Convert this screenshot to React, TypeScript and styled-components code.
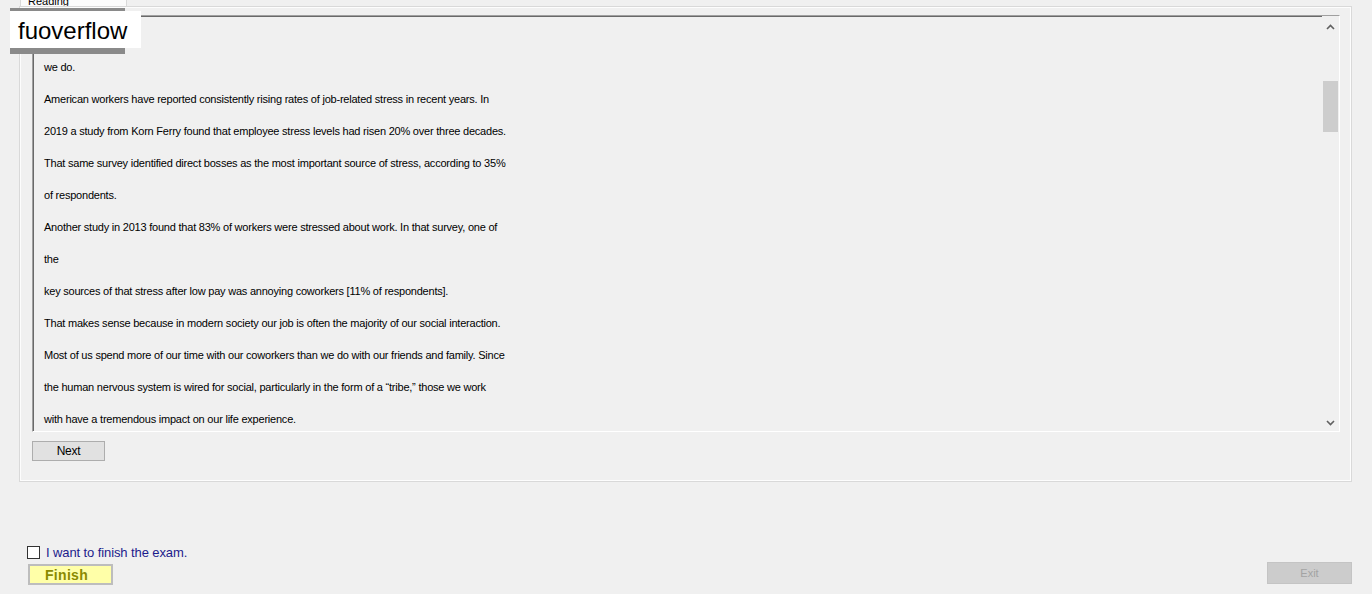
import React from 'react'
import styled, { createGlobalStyle } from 'styled-components'

const GlobalStyle = createGlobalStyle`
  html, body {
    margin: 0;
    padding: 0;
    background: #f0f0f0;
    font-family: "Liberation Sans", Arial, sans-serif;
  }
  #root {
    width: 1372px;
    height: 594px;
    overflow: hidden;
  }
`;

const Page = styled.div`
  position: relative;
  width: 1372px;
  height: 594px;
  box-sizing: border-box;
  padding: 0 20px 0 19px;
  display: flex;
  flex-direction: column;
`;

const TabStrip = styled.div`
  height: 6px;
  display: flex;
  overflow: hidden;
`;

const Tab = styled.div`
  margin-left: 1px;
  width: 107px;
  height: 12px;
  margin-top: -5px;
  box-sizing: border-box;
  border: 1px solid #d9d9d9;
  background: #fbfbfb;
  font-size: 11px;
  line-height: 11px;
  padding-left: 7px;
  color: #000;
`;

const TabPage = styled.div`
  height: 476px;
  box-sizing: border-box;
  border: 1px solid #d9d9d9;
  box-shadow: inset 0 0 0 1px #fdfdfd;
  padding: 8px 11px 0 12px;
  display: flex;
  flex-direction: column;
  gap: 9px;
`;

const TextBox = styled.div`
  width: 1308px;
  height: 417px;
  box-sizing: border-box;
  border-top: 1px solid #a0a0a0;
  border-left: 1px solid #a0a0a0;
  border-right: 1px solid #ffffff;
  border-bottom: 1px solid #ffffff;
  box-shadow: inset 1px 1px 0 #696969;
  display: flex;
  overflow: hidden;
`;

const TextArea = styled.div`
  flex: 1;
  padding: 35px 0 0 11px;
  font-size: 11px;
  letter-spacing: -0.22px;
  color: #000;
`;

const Line = styled.div`
  height: 32px;
  line-height: 32px;
  white-space: pre;
`;

const ScrollBar = styled.div`
  width: 17px;
  display: flex;
  flex-direction: column;
  align-items: center;
  background: #f0f0f0;
`;

const Arrow = styled.div<{ $h: number }>`
  height: ${(p) => p.$h}px;
  width: 17px;
  display: flex;
  align-items: center;
  justify-content: center;
`;

const Track = styled.div<{ $offset: number }>`
  flex: 1;
  width: 15px;
  padding-top: ${(p) => p.$offset}px;
`;

const Thumb = styled.div`
  height: 51px;
  background: #cdcdcd;
`;

const Button = styled.button`
  width: 73px;
  height: 20px;
  box-sizing: border-box;
  border: 1px solid #adadad;
  background: #e1e1e1;
  font-family: "Liberation Sans", Arial, sans-serif;
  font-size: 12px;
  letter-spacing: -0.3px;
  color: #000;
  padding: 0;
`;

const Footer = styled.div`
  margin-top: 63px;
  margin-left: 8px;
  display: flex;
  justify-content: space-between;
  align-items: flex-end;
`;

const FinishColumn = styled.div`
  display: flex;
  flex-direction: column;
  gap: 4px;
`;

const CheckRow = styled.label`
  height: 15px;
  display: flex;
  align-items: center;
  gap: 6px;
  font-size: 13px;
  letter-spacing: -0.1px;
  color: #1c1c8c;
`;

const CheckBox = styled.span`
  width: 13px;
  height: 13px;
  box-sizing: border-box;
  border: 1px solid #333;
  background: #fff;
`;

const BigButton = styled.button<{ $tone: 'finish' | 'exit' }>`
  width: 85px;
  height: ${(p) => (p.$tone === 'finish' ? '21px' : '22px')};
  box-sizing: border-box;
  padding: ${(p) => (p.$tone === 'finish' ? '0 8px 0 0' : '0')};
  font-family: "Liberation Sans", Arial, sans-serif;
  border: ${(p) => (p.$tone === 'finish' ? '2px solid #bdbdbd' : '1px solid #c4c4c4')};
  background: ${(p) => (p.$tone === 'finish' ? '#ffffa8' : '#cccccc')};
  color: ${(p) => (p.$tone === 'finish' ? '#8a8a00' : '#a3a3a3')};
  font-weight: ${(p) => (p.$tone === 'finish' ? 700 : 400)};
  font-size: ${(p) => (p.$tone === 'finish' ? '14px' : '11px')};
  letter-spacing: ${(p) => (p.$tone === 'finish' ? '0.3px' : '0')};
  margin-left: ${(p) => (p.$tone === 'finish' ? '1px' : '0')};
  margin-bottom: ${(p) => (p.$tone === 'finish' ? '0' : '1px')};
`;

const Watermark = styled.div`
  position: absolute;
  left: 10px;
  top: 8px;
  width: 131px;
  display: flex;
  flex-direction: column;
`;

const WatermarkBar = styled.div<{ $h: number }>`
  width: 115px;
  height: ${(p) => p.$h}px;
  background: #8a8a8a;
`;

const WatermarkText = styled.div`
  height: 37px;
  background: #fff;
  font-size: 24px;
  line-height: 39px;
  padding-left: 8px;
  color: #000;
`;

const lines = [
  'we do.',
  'American workers have reported consistently rising rates of job-related stress in recent years. In',
  '2019 a study from Korn Ferry found that employee stress levels had risen 20% over three decades.',
  'That same survey identified direct bosses as the most important source of stress, according to 35%',
  'of respondents.',
  'Another study in 2013 found that 83% of workers were stressed about work. In that survey, one of',
  'the',
  'key sources of that stress after low pay was annoying coworkers [11% of respondents].',
  'That makes sense because in modern society our job is often the majority of our social interaction.',
  'Most of us spend more of our time with our coworkers than we do with our friends and family. Since',
  'the human nervous system is wired for social, particularly in the form of a \u201Ctribe,\u201D those we work',
  'with have a tremendous impact on our life experience.',
];

const Chevron = ({ up }: { up?: boolean }) => (
  <svg width="9" height="6" viewBox="0 0 9 6">
    <path
      d={up ? 'M1 5 L4.5 1.5 L8 5' : 'M1 1 L4.5 4.5 L8 1'}
      fill="none"
      stroke="#606060"
      strokeWidth="1.6"
    />
  </svg>
);

export default function App() {
  return (
    <>
      <GlobalStyle />
      <Page>
        <TabStrip>
          <Tab>Reading</Tab>
        </TabStrip>
        <TabPage>
          <TextBox>
            <TextArea>
              {lines.map((l, i) => (
                <Line key={i}>{l}</Line>
              ))}
            </TextArea>
            <ScrollBar>
              <Arrow $h={21}>
                <Chevron up />
              </Arrow>
              <Track $offset={44}>
                <Thumb />
              </Track>
              <Arrow $h={17}>
                <Chevron />
              </Arrow>
            </ScrollBar>
          </TextBox>
          <Button>Next</Button>
        </TabPage>
        <Footer>
          <FinishColumn>
            <CheckRow>
              <CheckBox />
              I want to finish the exam.
            </CheckRow>
            <BigButton $tone="finish">Finish</BigButton>
          </FinishColumn>
          <BigButton $tone="exit">Exit</BigButton>
        </Footer>
        <Watermark>
          <WatermarkBar $h={3} />
          <WatermarkText>fuoverflow</WatermarkText>
          <WatermarkBar $h={6} />
        </Watermark>
      </Page>
    </>
  );
}
